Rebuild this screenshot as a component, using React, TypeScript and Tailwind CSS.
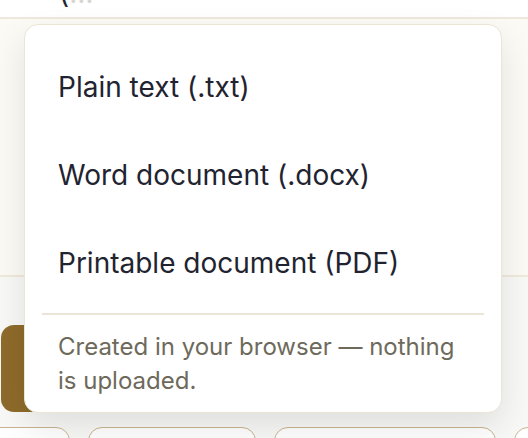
import React from "react";

const formats = [
  "Plain text (.txt)",
  "Word document (.docx)",
  "Printable document (PDF)",
];

const App: React.FC = () => {
  return (
    <div
      className="relative w-[528px] h-[438px] overflow-hidden bg-[#f8f8f7]"
      style={{ fontFamily: "Inter, 'Noto Sans', sans-serif" }}
    >
      {/* top card, mostly scrolled away */}
      <div className="h-[19px] overflow-hidden bg-white border-b-2 border-[#efe9dc]">
        <p className="-mt-[22px] pl-[59px] text-[28px] leading-[30px] text-[#1f2430]">
          (<span className="text-[#d8d6d0]">…</span>
        </p>
      </div>

      {/* cream panel */}
      <div className="h-[258px] bg-[#fcfaf5] border-b-2 border-[#efe9dc]" />

      {/* actions */}
      <div className="flex flex-col pt-[48px]">
        <div className="ml-px w-[240px] h-[87px] rounded-[13px] bg-[#8e6b2b]" />
        <div className="flex gap-[18px] mt-[15px] -ml-[100px]">
          <div className="w-[170px] h-[40px] shrink-0 rounded-[14px] border-[1.5px] border-[#c9b48e] bg-white" />
          <div className="w-[168px] h-[40px] shrink-0 rounded-[14px] border-[1.5px] border-[#c9b48e] bg-white" />
          <div className="w-[222px] h-[40px] shrink-0 rounded-[14px] border-[1.5px] border-[#c9b48e] bg-white" />
          <div className="w-[120px] h-[40px] shrink-0 rounded-[14px] border-[1.5px] border-[#c9b48e] bg-white" />
        </div>
      </div>

      {/* export menu */}
      <div className="absolute left-[24px] top-[24px] w-[478px] h-[389px] rounded-[14px] border-[1.5px] border-[#ece5d5] bg-white shadow-[0_14px_34px_rgba(0,0,0,0.10)] flex flex-col pt-[18px]">
        {formats.map((label) => (
          <button
            key={label}
            type="button"
            className="h-[88px] shrink-0 flex items-center px-[33px] text-left text-[28px] text-[#1f2430]"
          >
            {label}
          </button>
        ))}
        <div className="mx-[17px] mt-[6px] h-[2px] bg-[#ebe5d7]" />
        <p className="pl-[33px] pr-[30px] pt-[15px] text-[24px] leading-[34px] text-[#6e6a5b]">
          Created in your browser — nothing is uploaded.
        </p>
      </div>
    </div>
  );
};

export default App;
